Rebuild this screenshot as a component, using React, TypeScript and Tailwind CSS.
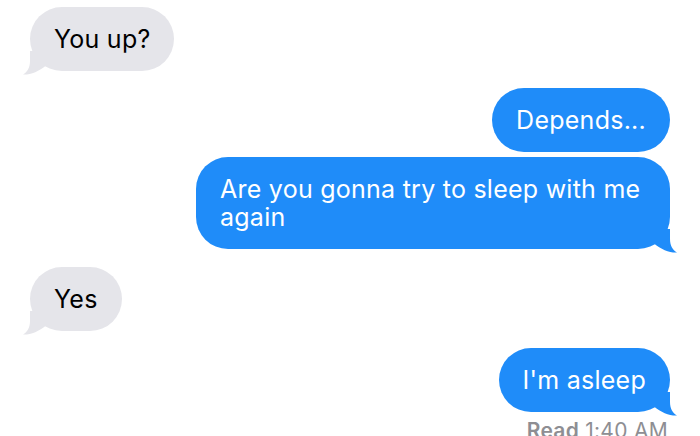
import React from 'react';

type Side = 'in' | 'out';

function Tail({ side, color }: { side: Side; color: string }) {
  if (side === 'in') {
    return (
      <svg
        className="absolute bottom-[-4px] left-[-7px]"
        width="38"
        height="24"
        viewBox="0 0 38 24"
      >
        <path d="M7 0 L7 10 C7 16.5 4.5 21 0 23.5 C7 24 16 20.5 23 14.5 L38 0 Z" fill={color} />
      </svg>
    );
  }
  return (
    <svg
      className="absolute bottom-[-4px] right-[-7px]"
      width="38"
      height="24"
      viewBox="0 0 38 24"
    >
      <path d="M31 0 L31 10 C31 16.5 33.5 21 38 23.5 C31 24 22 20.5 15 14.5 L0 0 Z" fill={color} />
    </svg>
  );
}

function Bubble({
  side,
  tail,
  children,
}: {
  side: Side;
  tail?: boolean;
  children: React.ReactNode;
}) {
  const isIn = side === 'in';
  const color = isIn ? '#e5e5ea' : '#1f8cf9';
  return (
    <div className={isIn ? 'flex justify-start pl-[30px]' : 'flex justify-end pr-[30px]'}>
      <div
        className={
          'relative max-w-[474px] rounded-[32px] px-[24px] py-[18px] text-[25px] leading-[28px] tracking-[0.25px] ' +
          (isIn ? 'bg-[#e5e5ea] text-black' : 'bg-[#1f8cf9] text-white')
        }
      >
        {tail && <Tail side={side} color={color} />}
        <span className="relative">{children}</span>
      </div>
    </div>
  );
}

export default function App() {
  return (
    <div
      className="h-[436px] w-[700px] overflow-hidden bg-white pt-[7px]"
      style={{ fontFamily: 'Inter, "Liberation Sans", sans-serif' }}
    >
      <Bubble side="in" tail>
        You up?
      </Bubble>
      <div className="mt-[17px]">
        <Bubble side="out">Depends...</Bubble>
      </div>
      <div className="mt-[5px]">
        <Bubble side="out" tail>
          Are you gonna try to sleep with me again
        </Bubble>
      </div>
      <div className="mt-[18px]">
        <Bubble side="in" tail>
          Yes
        </Bubble>
      </div>
      <div className="mt-[17px]">
        <Bubble side="out" tail>
          I'm asleep
        </Bubble>
      </div>
      <div className="mt-[7px] flex justify-end pr-[32px] text-[21px] leading-[24px] tracking-[0.3px] text-[#8e8e93]">
        <span className="font-semibold">Read</span>
        <span className="ml-[6px]">1:40 AM</span>
      </div>
    </div>
  );
}
